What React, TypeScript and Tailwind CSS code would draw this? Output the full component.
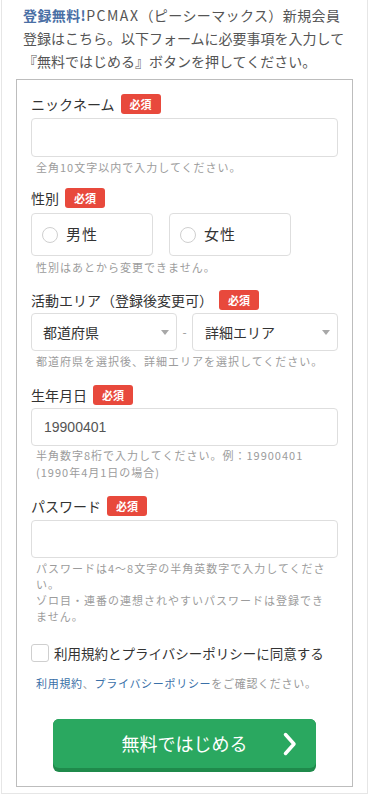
import { useState } from 'react';

const font = { fontFamily: '"Noto Sans CJK JP", "Noto Sans", sans-serif' };

function Badge() {
  return (
    <span className="ml-[6px] inline-flex h-[20px] w-[40px] items-center justify-center rounded-[3px] bg-[#e8493c] text-[11px] font-bold leading-none text-white">
      必須
    </span>
  );
}

function Label({ children }: { children: React.ReactNode }) {
  return (
    <div className="flex h-[20px] items-center text-[14px] leading-[20px] text-[#333]">
      <span>{children}</span>
      <Badge />
    </div>
  );
}

function Help({ children, className = '' }: { children: React.ReactNode; className?: string }) {
  return (
    <p className={`pl-[5px] text-[11px] leading-[16px] tracking-[1px] text-[#9c9c9c] ${className}`}>{children}</p>
  );
}

function Caret() {
  return (
    <svg width="8" height="5" viewBox="0 0 8 5" className="shrink-0">
      <path d="M0 0h8L4 5z" fill="#a8a8a8" />
    </svg>
  );
}

export default function App() {
  const [gender, setGender] = useState<string | null>(null);
  const [agree, setAgree] = useState(false);

  return (
    <div style={font} className="ml-[1px] h-[794px] w-[367px] border-x border-b border-[#e6e6e6] bg-white">
      <div className="px-[21px] pt-[4px] text-[14px] leading-[23px] text-[#555]">
        <p className="whitespace-nowrap tracking-[0.4px]">
          <span className="font-bold text-[#4a6fa5]">登録無料</span>
          <span className="font-bold text-[#4a6fa5]">!</span>
          <span className="tracking-[1.5px]">PCMAX</span>（ピーシーマックス）新規会員
        </p>
        <p className="whitespace-nowrap">登録はこちら。以下フォームに必要事項を入力して</p>
        <p className="whitespace-nowrap">『無料ではじめる』ボタンを押してください。</p>
      </div>

      <div className="mx-[14px] mt-[6px] border border-[#bdbdbd] bg-white px-[14px] pb-[14px] pt-[14px]">
        {/* nickname */}
        <Label>ニックネーム</Label>
        <input className="mt-[4px] block h-[39px] w-full rounded-[4px] border border-[#dedede] px-3 text-[14px] outline-none" />
        <Help className="mt-[2px]">全角10文字以内で入力してください。</Help>

        {/* gender */}
        <div className="mt-[13px]">
          <Label>性別</Label>
        </div>
        <div className="mt-[5px] flex gap-[16px]">
          {['男性', '女性'].map((g) => (
            <button
              key={g}
              onClick={() => setGender(g)}
              className="flex h-[43px] w-[122px] items-center rounded-[4px] border border-[#dedede] bg-white pl-[10px]"
            >
              <span className="flex h-[16px] w-[16px] items-center justify-center rounded-full border border-[#cfcfcf]">
                {gender === g && <span className="h-[8px] w-[8px] rounded-full bg-[#27a65e]" />}
              </span>
              <span className="ml-[8px] text-[15px] tracking-[1px] text-[#333]">{g}</span>
            </button>
          ))}
        </div>
        <Help className="mt-[3px]">性別はあとから変更できません。</Help>

        {/* area */}
        <div className="mt-[15px]">
          <Label>活動エリア（登録後変更可）</Label>
        </div>
        <div className="mt-[3px] flex items-center">
          <div className="flex h-[38px] w-[146px] items-center justify-between rounded-[4px] border border-[#dedede] pl-[11px] pr-[7px] text-[14px] text-[#333]">
            都道府県
            <Caret />
          </div>
          <span className="flex-1 text-center text-[12px] text-[#999]">-</span>
          <div className="flex h-[38px] w-[146px] items-center justify-between rounded-[4px] border border-[#dedede] pl-[12px] pr-[7px] text-[14px] text-[#333]">
            詳細エリア
            <Caret />
          </div>
        </div>
        <Help className="mt-[2px]">都道府県を選択後、詳細エリアを選択してください。</Help>

        {/* birthday */}
        <div className="mt-[16px]">
          <Label>生年月日</Label>
        </div>
        <div className="mt-[3px] flex h-[38px] w-full items-center rounded-[4px] border border-[#dedede] pl-[12px] text-[14px] text-[#555]" style={{ fontFamily: '"Liberation Sans", Arial, sans-serif' }}>
          19900401
        </div>
        <Help className="mt-[1px] leading-[17px]">
          半角数字8桁で入力してください。例：19900401
          <br />
          (1990年4月1日の場合)
        </Help>

        {/* password */}
        <div className="mt-[15px]">
          <Label>パスワード</Label>
        </div>
        <input type="password" className="mt-[4px] block h-[38px] w-full rounded-[4px] border border-[#dedede] px-3 text-[14px] outline-none" />
        <Help className="mt-[2px]">
          パスワードは4〜8文字の半角英数字で入力してください。
          <br />
          ゾロ目・連番の連想されやすいパスワードは登録でき
          <br />
          ません。
        </Help>

        {/* agree */}
        <label className="mt-[19px] flex items-center">
          <span
            onClick={() => setAgree(!agree)}
            className="flex h-[18px] w-[18px] items-center justify-center rounded-[3px] border border-[#cfcfcf] bg-white text-[12px] text-[#27a65e]"
          >
            {agree ? '✓' : ''}
          </span>
          <span className="ml-[5px] text-[13.5px] leading-[20px] text-[#333]">利用規約とプライバシーポリシーに同意する</span>
        </label>

        <p className="mt-[12px] pl-[5px] text-[11px] leading-[16px] tracking-[0.7px] text-[#999]">
          <span className="text-[#3a70a8]">利用規約</span>、<span className="text-[#3a70a8]">プライバシーポリシー</span>をご確認ください。
        </p>

        <div className="mt-[28px] flex justify-center">
          <button className="relative flex h-[53px] w-[263px] items-center justify-center rounded-[6px] bg-[#1f8a4b] pb-[4px]">
            <span className="absolute inset-x-0 top-0 h-[49px] rounded-[6px] bg-[#2aa860]" />
            <span className="relative text-[18px] text-white">無料ではじめる</span>
            <svg className="absolute right-[19px] top-[13px]" width="14" height="24" viewBox="0 0 14 24">
              <path d="M2.5 2.5 11 12l-8.5 9.5" fill="none" stroke="#fff" strokeWidth="3.5" strokeLinecap="round" strokeLinejoin="round" />
            </svg>
          </button>
        </div>
      </div>
    </div>
  );
}
